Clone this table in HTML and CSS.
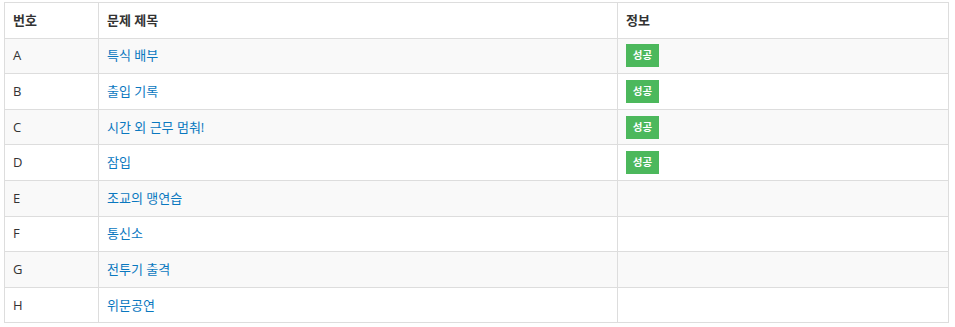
FILE: index.html
```html
<!DOCTYPE html>
<html lang="ko">
<head>
<meta charset="utf-8">
<link rel="stylesheet" href="styles.css">
</head>
<body>
<div class="wrap">
<table class="problems">
<colgroup>
<col class="c-num"><col class="c-title"><col class="c-info">
</colgroup>
<thead>
<tr><th>번호</th><th>문제 제목</th><th>정보</th></tr>
</thead>
<tbody>
<tr><td>A</td><td><a href="#">특식 배부</a></td><td><span class="badge">성공</span></td></tr>
<tr><td>B</td><td><a href="#">출입 기록</a></td><td><span class="badge">성공</span></td></tr>
<tr><td>C</td><td><a href="#">시간 외 근무 멈춰!</a></td><td><span class="badge">성공</span></td></tr>
<tr><td>D</td><td><a href="#">잠입</a></td><td><span class="badge">성공</span></td></tr>
<tr><td>E</td><td><a href="#">조교의 맹연습</a></td><td></td></tr>
<tr><td>F</td><td><a href="#">통신소</a></td><td></td></tr>
<tr><td>G</td><td><a href="#">전투기 출격</a></td><td></td></tr>
<tr><td>H</td><td><a href="#">위문공연</a></td><td></td></tr>
</tbody>
</table>
</div>
</body>
</html>
```
FILE: styles.css
```css
html, body {
  margin: 0;
  padding: 0;
  background: #fff;
}
body {
  font-family: "Open Sans", "Noto Sans CJK KR", sans-serif;
  font-size: 13px;
  color: #333;
}
.wrap {
  padding: 2px 6px 0 4px;
}
.problems {
  width: 945px;
  border-collapse: collapse;
  border: 1px solid #ddd;
  table-layout: fixed;
}
.c-num { width: 94px; }
.c-title { width: 519px; }
.c-info { width: 331px; }
.problems th,
.problems td {
  border: 1px solid #ddd;
  padding: 0 8px;
  height: 35.6px;
  line-height: 19px;
  text-align: left;
  vertical-align: middle;
  box-sizing: border-box;
}
.problems th {
  font-weight: bold;
  color: #333;
}
.problems tbody tr:nth-child(odd) td {
  background: #f9f9f9;
}
.problems a {
  color: #0a78bf;
  text-decoration: none;
}
.badge {
  display: inline-block;
  width: 33px;
  height: 23px;
  line-height: 23px;
  background: #4cb85c;
  color: #fff;
  font-size: 10.5px;
  font-weight: bold;
  text-align: center;
  vertical-align: middle;
}
```
